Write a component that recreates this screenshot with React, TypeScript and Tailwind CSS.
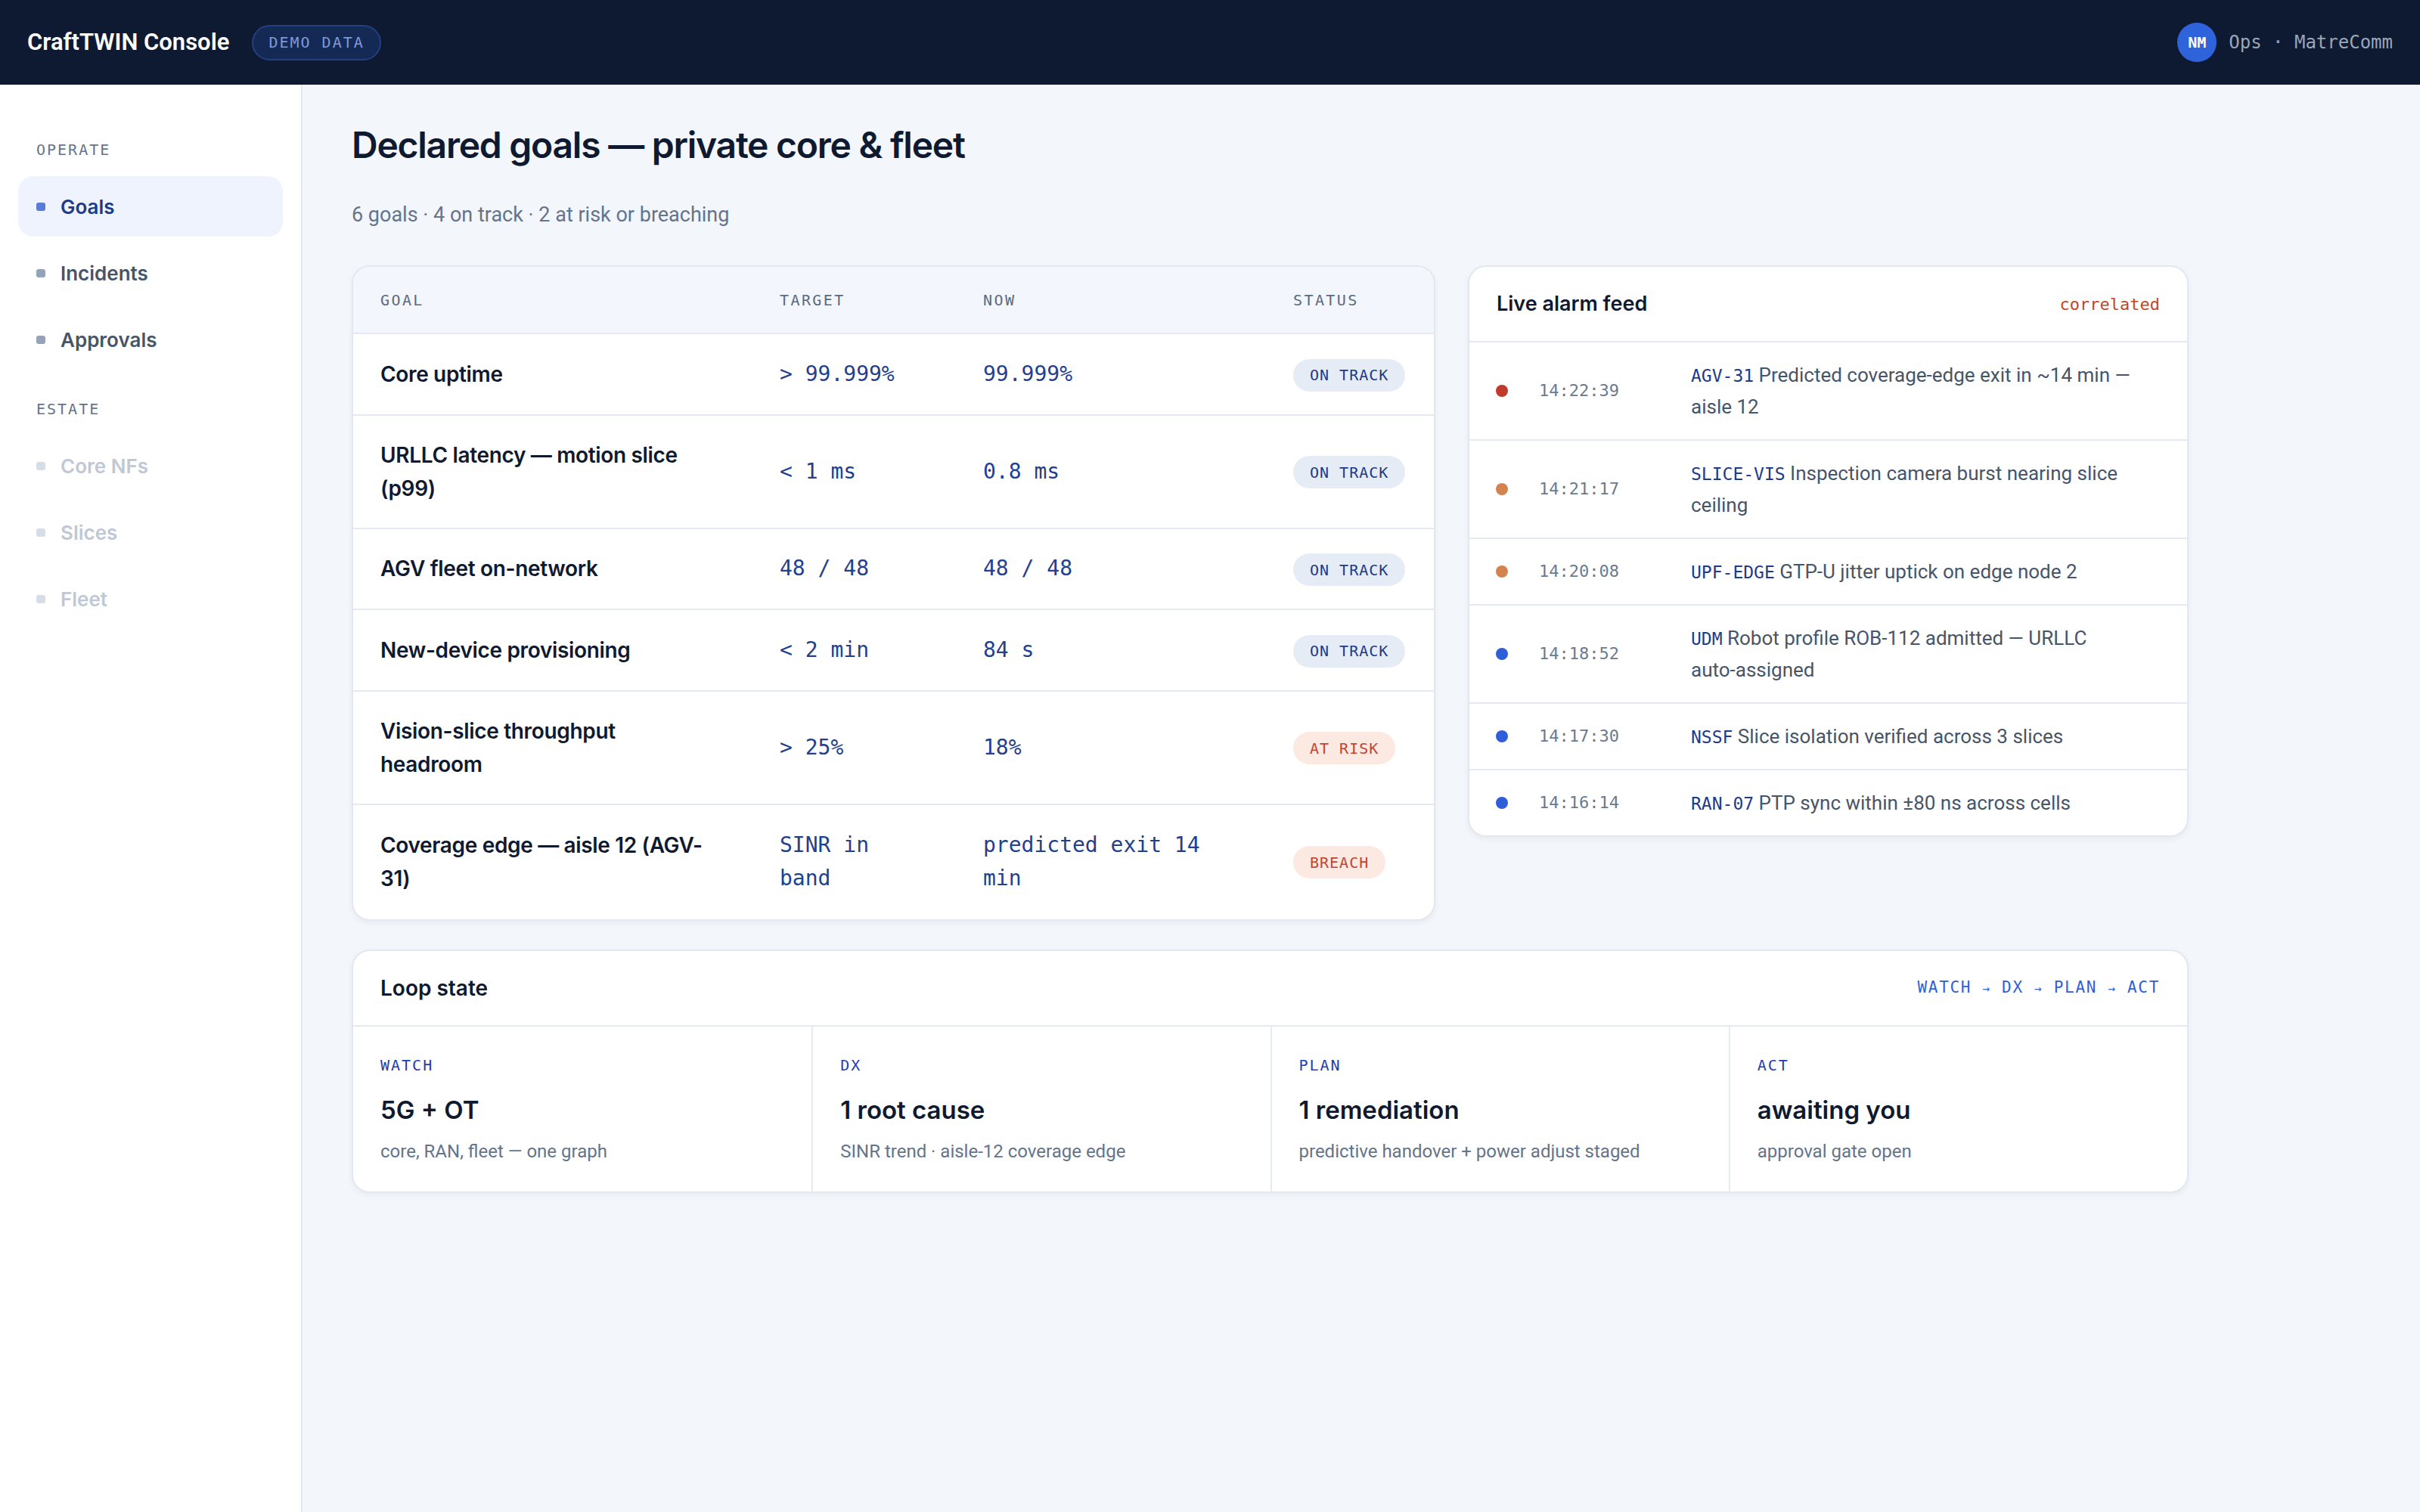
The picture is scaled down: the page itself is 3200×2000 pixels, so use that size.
const sans = "font-['Roboto',sans-serif]";
const display = "font-['Inter',sans-serif]";
const mono = "font-['DejaVu_Sans_Mono',monospace]";

const goals = [
  { name: "Core uptime", target: "> 99.999%", now: "99.999%", status: "ON TRACK" },
  { name: "URLLC latency — motion slice (p99)", target: "< 1 ms", now: "0.8 ms", status: "ON TRACK" },
  { name: "AGV fleet on-network", target: "48 / 48", now: "48 / 48", status: "ON TRACK" },
  { name: "New-device provisioning", target: "< 2 min", now: "84 s", status: "ON TRACK" },
  { name: "Vision-slice throughput headroom", target: "> 25%", now: "18%", status: "AT RISK" },
  { name: "Coverage edge — aisle 12 (AGV-31)", target: "SINR in band", now: "predicted exit 14 min", status: "BREACH" },
];

const alarms = [
  { dot: "bg-[#c0392b]", time: "14:22:39", code: "AGV-31", text: "Predicted coverage-edge exit in ~14 min — aisle 12" },
  { dot: "bg-[#d4834f]", time: "14:21:17", code: "SLICE-VIS", text: "Inspection camera burst nearing slice ceiling" },
  { dot: "bg-[#d4834f]", time: "14:20:08", code: "UPF-EDGE", text: "GTP-U jitter uptick on edge node 2" },
  { dot: "bg-[#2f5fd8]", time: "14:18:52", code: "UDM", text: "Robot profile ROB-112 admitted — URLLC auto-assigned" },
  { dot: "bg-[#2f5fd8]", time: "14:17:30", code: "NSSF", text: "Slice isolation verified across 3 slices" },
  { dot: "bg-[#2f5fd8]", time: "14:16:14", code: "RAN-07", text: "PTP sync within ±80 ns across cells" },
];

const loop = [
  { label: "WATCH", value: "5G + OT", sub: "core, RAN, fleet — one graph" },
  { label: "DX", value: "1 root cause", sub: "SINR trend · aisle-12 coverage edge" },
  { label: "PLAN", value: "1 remediation", sub: "predictive handover + power adjust staged" },
  { label: "ACT", value: "awaiting you", sub: "approval gate open" },
];

function StatusPill({ status }: { status: string }) {
  const tone =
    status === "ON TRACK"
      ? "bg-[#e6ecf6] text-[#1e3a8a]"
      : "bg-[#fbe9e2] text-[#c2452d]";
  return (
    <span className={`${mono} ${tone} inline-flex h-[43px] items-center rounded-full px-[22px] text-[20px] leading-none tracking-[0.05em]`}>
      {status}
    </span>
  );
}

function NavItem({ label, state }: { label: string; state: "active" | "idle" | "off" }) {
  const box = state === "active" ? "bg-[#eef3fd]" : "";
  const dot = state === "active" ? "bg-[#5b7bd5]" : state === "idle" ? "bg-[#94a3b8]" : "bg-[#d7dde7]";
  const text = state === "active" ? "text-[#1e3a8a]" : state === "idle" ? "text-[#475569]" : "text-[#bfc8d6]";
  return (
    <div className={`${box} flex h-[80px] items-center gap-[20px] rounded-[20px] px-[24px]`}>
      <span className={`${dot} h-[11px] w-[12px] rounded-[3px]`} />
      <span className={`${display} ${text} text-[26px] font-semibold`}>{label}</span>
    </div>
  );
}

export default function App() {
  return (
    <div className={`${sans} flex min-h-screen flex-col bg-[#f3f6fb] text-[#0f1a30]`}>
      {/* top bar */}
      <header className="flex h-[112px] shrink-0 items-center justify-between bg-[#0e1a31] px-[36px]">
        <div className="flex items-center gap-[30px]">
          <span className="text-[31px] font-semibold text-white">CraftTWIN Console</span>
          <span className={`${mono} flex h-[47px] items-center rounded-full border-2 border-[#243f80] bg-[#142a55] px-[20px] text-[20px] tracking-[0.1em] text-[#7f98dc]`}>
            DEMO DATA
          </span>
        </div>
        <div className="flex items-center gap-[16px]">
          <span className={`${mono} flex h-[52px] w-[52px] items-center justify-center rounded-full bg-[#2f63db] text-[20px] font-bold text-white`}>
            NM
          </span>
          <span className={`${mono} text-[24px] text-[#9aa6b9]`}>Ops · MatreComm</span>
        </div>
      </header>

      <div className="flex flex-1">
        {/* sidebar */}
        <aside className="w-[400px] shrink-0 border-r-2 border-[#e4e9f1] bg-white px-[24px] pt-[72px]">
          <div className={`${mono} px-[24px] text-[20px] leading-[28px] tracking-[0.1em] text-[#64748b]`}>OPERATE</div>
          <div className="mt-[21px] flex flex-col gap-[8px]">
            <NavItem label="Goals" state="active" />
            <NavItem label="Incidents" state="idle" />
            <NavItem label="Approvals" state="idle" />
          </div>
          <div className={`${mono} mt-[38px] px-[24px] text-[20px] leading-[28px] tracking-[0.1em] text-[#64748b]`}>ESTATE</div>
          <div className="mt-[21px] flex flex-col gap-[8px]">
            <NavItem label="Core NFs" state="off" />
            <NavItem label="Slices" state="off" />
            <NavItem label="Fleet" state="off" />
          </div>
        </aside>

        {/* main */}
        <main className="flex-1 pl-[65px] pt-[51px]">
          <div className="w-[2429px]">
            <h1 className={`${display} text-[48px] font-semibold leading-[58px] tracking-[-0.026em] text-[#0f1a30]`}>
              Declared goals — private core &amp; fleet
            </h1>
            <p className="mt-[43px] text-[27px] leading-[40px] text-[#64748b]">
              6 goals · 4 on track · 2 at risk or breaching
            </p>

            <div className="mt-[47px] grid grid-cols-[1433px_1fr] items-start gap-[43px]">
              {/* goals table */}
              <div className="overflow-hidden rounded-[24px] border-2 border-[#e3e8f0] bg-white shadow-[0_3px_8px_rgba(15,23,42,0.05)]">
                <div className={`${mono} grid h-[89px] grid-cols-[528px_269px_410px_1fr] items-center border-b-2 border-[#e4e9f3] bg-[#f3f6fc] text-[20px] tracking-[0.12em] text-[#5b6b82]`}>
                  <span className="pl-[36px]">GOAL</span>
                  <span className="pl-[36px]">TARGET</span>
                  <span className="pl-[36px]">NOW</span>
                  <span className="pl-[36px]">STATUS</span>
                </div>
                {goals.map((g, i) => (
                  <div
                    key={g.name}
                    className={`grid grid-cols-[528px_269px_410px_1fr] items-center text-[28px] leading-[44px] ${i < goals.length - 1 ? "border-b-2 border-[#e4e9f3] py-[30px]" : "pb-[32px] pt-[31px]"}`}
                  >
                    <span className={`${display} pl-[36px] pr-[52px] font-semibold tracking-[-0.012em] text-[#0f1a30]`}>{g.name}</span>
                    <span className={`${mono} px-[36px] text-[#23408e]`}>{g.target}</span>
                    <span className={`${mono} px-[36px] text-[#23408e]`}>{g.now}</span>
                    <span className="pl-[36px]">
                      <StatusPill status={g.status} />
                    </span>
                  </div>
                ))}
              </div>

              {/* alarm feed */}
              <div className="overflow-hidden rounded-[24px] border-2 border-[#e3e8f0] bg-white shadow-[0_3px_8px_rgba(15,23,42,0.05)]">
                <div className="flex h-[100px] items-center justify-between border-b-2 border-[#e4e9f3] px-[36px]">
                  <span className={`${display} text-[27px] font-semibold text-[#0f1a30]`}>Live alarm feed</span>
                  <span className={`${mono} text-[22px] text-[#c2461f]`}>correlated</span>
                </div>
                {alarms.map((a, i) => (
                  <div
                    key={a.time}
                    className={`flex items-center py-[22px] pl-[35px] pr-[36px] ${i < alarms.length - 1 ? "border-b-2 border-[#e4e9f3]" : ""}`}
                  >
                    <span className={`${a.dot} h-[16px] w-[16px] shrink-0 rounded-full`} />
                    <span className={`${mono} ml-[41px] w-[201px] shrink-0 text-[22px] leading-[30px] text-[#6b7a90]`}>{a.time}</span>
                    <p className="max-w-[586px] flex-1 text-[26px] leading-[42px] text-[#475569]">
                      <span className={`${mono} text-[23px] leading-none text-[#1e3a8a]`}>{a.code}</span> {a.text}
                    </p>
                  </div>
                ))}
              </div>
            </div>

            {/* loop state */}
            <div className="mt-[38px] overflow-hidden rounded-[24px] border-2 border-[#e3e8f0] bg-white shadow-[0_3px_8px_rgba(15,23,42,0.05)]">
              <div className="flex h-[100px] items-center justify-between border-b-2 border-[#e4e9f3] px-[36px]">
                <span className={`${display} text-[28px] font-semibold text-[#0f1a30]`}>Loop state</span>
                <span className={`${mono} text-[21px] tracking-[0.08em] text-[#2f5fd8]`}>
                  WATCH <span className="text-[16px]">→</span> DX <span className="text-[16px]">→</span> PLAN{" "}
                  <span className="text-[16px]">→</span> ACT
                </span>
              </div>
              <div className="grid grid-cols-4">
                {loop.map((l, i) => (
                  <div key={l.label} className={`px-[36px] pb-[36px] pt-[38px] ${i > 0 ? "border-l-2 border-[#e6ebf3]" : ""}`}>
                    <div className={`${mono} text-[20px] leading-[26px] tracking-[0.1em] text-[#1e40af]`}>{l.label}</div>
                    <div className={`${display} mt-[24px] text-[33px] font-semibold leading-[44px] text-[#0f1a30]`}>{l.value}</div>
                    <div className="mt-[16px] text-[24px] leading-[34px] text-[#64748b]">{l.sub}</div>
                  </div>
                ))}
              </div>
            </div>
          </div>
        </main>
      </div>
    </div>
  );
}
